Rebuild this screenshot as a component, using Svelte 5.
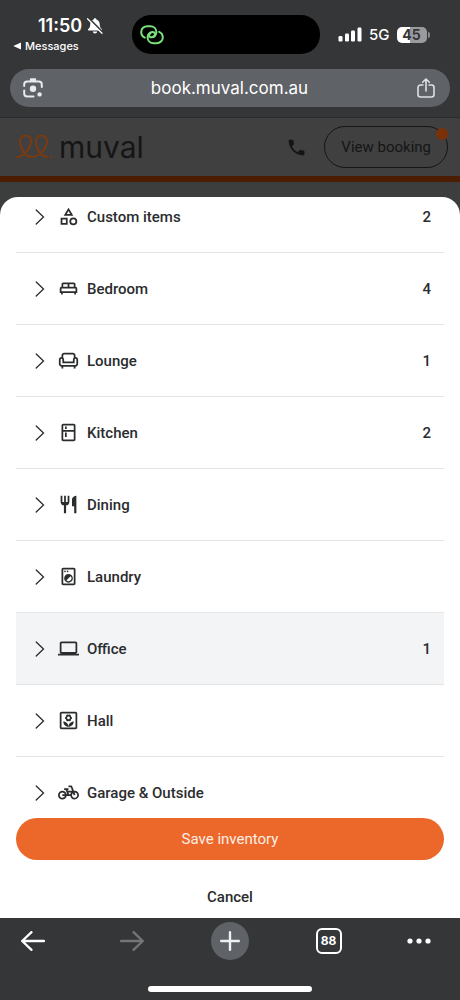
<script>
  const rooms = [
    { name: 'Custom items', count: 2, icon: 'category' },
    { name: 'Bedroom', count: 4, icon: 'bed' },
    { name: 'Lounge', count: 1, icon: 'sofa' },
    { name: 'Kitchen', count: 2, icon: 'fridge' },
    { name: 'Dining', icon: 'dining' },
    { name: 'Laundry', icon: 'laundry' },
    { name: 'Office', count: 1, icon: 'laptop' },
    { name: 'Hall', icon: 'hall' },
    { name: 'Garage & Outside', icon: 'bike' }
  ];

  const icons = {
    category:
      'M12 2l-5.5 9h11L12 2zm0 3.84L13.93 9h-3.87L12 5.84zM17.5 13a4.5 4.5 0 1 0 0 9 4.5 4.5 0 0 0 0-9zm0 7a2.5 2.5 0 1 1 0-5 2.5 2.5 0 0 1 0 5zM3 21.500h8v-8H3v8zm2-6h4v4H5v-4z',
    bed: 'M20 10V7c0-1.100-.9-2-2-2H6c-1.100 0-2 .9-2 2v3c-1.100 0-2 .9-2 2v5h1.330L4 19h1l.67-2h12.670l.66 2h1l.67-2H22v-5c0-1.100-.9-2-2-2zm-7-3h5v3h-5V7zM6 7h5v3H6V7zm14 8H4v-3h16v3z',
    sofa: 'M20 8V6c0-1.660-1.340-3-3-3H7C5.340 3 4 4.340 4 6v2c-1.660 0-3 1.340-3 3v5c0 1.660 1.340 3 3 3v2h2v-2h12v2h2v-2c1.660 0 3-1.340 3-3v-5c0-1.660-1.340-3-3-3zM6 6c0-.55.45-1 1-1h10c.55 0 1 .45 1 1v2.780c-.61.55-1 1.340-1 2.220v2H7v-2c0-.88-.39-1.670-1-2.220V6zm15 10c0 .55-.45 1-1 1H4c-.55 0-1-.45-1-1v-5a1 1 0 0 1 2 0v4h14v-4a1 1 0 0 1 2 0v5z',
    fridge:
      'M18 2H6c-1.100 0-2 .9-2 2v16c0 1.100.9 2 2 2h12c1.100 0 2-.9 2-2V4c0-1.100-.9-2-2-2zm0 18H6v-9h12v9zm0-11H6V4h12v5zM8 5h2v3H8zM8 12h2v5H8z',
    dining:
      'M11 9H9V2H7v7H5V2H3v7c0 2.120 1.660 3.840 3.750 3.970V22h2.500v-9.030C11.340 12.840 13 11.120 13 9V2h-2v7zm5-3v8h2.500v8H21V2c-2.760 0-5 2.240-5 4z',
    laundry:
      'M18 2H6c-1.100 0-2 .9-2 2v16c0 1.100.9 2 2 2h12c1.100 0 2-.9 2-2V4c0-1.100-.9-2-2-2zm0 18H6V4h12v16zM8 5a1 1 0 1 0 0 2 1 1 0 0 0 0-2zM11 5a1 1 0 1 0 0 2 1 1 0 0 0 0-2zM12 19a5 5 0 1 0 0-10 5 5 0 0 0 0 10zm2.360-7.360a3.330 3.330 0 0 1-4.720 4.720l4.720-4.720z',
    laptop:
      'M20 18c1.100 0 2-.9 2-2V6c0-1.100-.9-2-2-2H4c-1.100 0-2 .9-2 2v10c0 1.100.9 2 2 2H0v2h24v-2h-4zM4 6h16v10H4V6z',
    hall: 'M20 2H4c-1.100 0-2 .9-2 2v16c0 1.100.9 2 2 2h16c1.100 0 2-.9 2-2V4c0-1.100-.9-2-2-2zm0 18H4V4h16v16zM12 19c3.310 0 6-2.690 6-6-3.310 0-6 2.690-6 6zM12 19c0-3.310-2.690-6-6-6 0 3.310 2.690 6 6 6zM8 9c0 .8.500 1.400 1.200 1.700a1.800 1.800 0 0 0 2.800 1.900 1.800 1.800 0 0 0 2.800-1.900A1.800 1.800 0 0 0 14.800 7.300 1.800 1.800 0 0 0 12 5.400a1.800 1.800 0 0 0-2.800 1.900C8.500 7.600 8 8.200 8 9zm4-1.600a1.600 1.600 0 1 1 0 3.200 1.600 1.600 0 0 1 0-3.200z',
    bike: 'M18.180 10l-1.700-4.680C16.190 4.530 15.440 4 14.600 4H12v2h2.600l1.460 4h-4.810l-.36-1H12V7H7v2h1.750l1.820 5H9.900c-.44-2.230-2.310-3.880-4.650-3.990C2.450 9.870 0 12.200 0 15c0 2.800 2.200 5 5 5 2.460 0 4.450-1.690 4.900-4h4.200c.44 2.230 2.310 3.880 4.650 3.990 2.800.13 5.250-2.190 5.250-5 0-2.800-2.200-5-5-5h-.82zM7.820 16c-.4 1.170-1.490 2-2.820 2-1.680 0-3-1.320-3-3s1.320-3 3-3c1.330 0 2.420.83 2.820 2H5v2h2.820zm6.280-2h-1.400l-.73-2H15c-.44.58-.76 1.250-.9 2zm4.900 4c-1.680 0-3-1.320-3-3 0-.93.41-1.730 1.050-2.280l.96 2.640 1.880-.68-.97-2.670.08-.01c1.680 0 3 1.320 3 3s-1.320 3-3 3z'
  };

  let active = $state('Office');
</script>

<div class="screen">
  <header class="browser">
    <div class="status">
      <div class="left">
        <div class="clock">
          <span>11:50</span>
          <svg width="18" height="18" viewBox="0 0 18 18" aria-hidden="true">
            <path d="M9 1.200c.8 0 1.300.5 1.400 1.200 2.100.6 3.200 2.300 3.300 4.600.1 2.900.8 3.900 2 5 .7.7.3 1.600-.6 1.600H2.900c-.9 0-1.300-.9-.6-1.600 1.200-1.100 1.900-2.100 2-5 .1-2.300 1.200-4 3.300-4.600.1-.7.6-1.200 1.400-1.200zM6.800 14.600h4.400c-.2 1.200-1 2-2.200 2s-2-.8-2.200-2z" fill="#fff" />
            <path d="M2.600 1.200l14 14" stroke="#343638" stroke-width="2" />
            <path d="M1.500 1.800l14.500 14.400" stroke="#fff" stroke-width="1.300" stroke-linecap="round" />
          </svg>
        </div>
        <a class="back" href="#messages">
          <svg width="8" height="8" viewBox="0 0 8 8" aria-hidden="true"><path d="M8 .5v7L.3 4z" fill="#fff" /></svg>
          Messages
        </a>
      </div>
      <div class="island">
        <svg width="24" height="20" viewBox="0 0 24 20" fill="none" stroke="#7be37c" stroke-width="2" stroke-linecap="round" aria-hidden="true">
          <path d="M4.800 12.600A6.200 6.200 0 0 1 1.200 7c0-3.400 2.800-5.800 6.200-5.800h2.800c3.600 0 6.200 2.500 6.200 5.800 0 3-2 5.300-4.800 5.300-1.600 0-2.600-.9-2.600-2.100 0-1 .6-1.700 1.500-2" />
          <path d="M19.200 6.800a6.200 6.200 0 0 1 3.600 5.600c0 3.400-2.800 5.800-6.200 5.800h-2.800c-3.600 0-6.200-2.500-6.200-5.800 0-3 2-5.300 4.800-5.300 1.600 0 2.600.9 2.600 2.100 0 1-.6 1.700-1.500 2" />
        </svg>
      </div>
      <div class="right">
        <svg width="24" height="15" viewBox="0 0 24 15" fill="#fff" aria-hidden="true">
          <rect x="0.500" y="9" width="4" height="5.500" rx="1.200" /><rect x="7" y="6.500" width="4" height="8" rx="1.200" /><rect x="13" y="3.500" width="4" height="11" rx="1.200" /><rect x="19.500" y="0.500" width="4" height="14" rx="1.200" />
        </svg>
        <span class="net">5G</span>
        <span class="battery">45</span>
      </div>
    </div>
    <div class="address">
      <button aria-label="Search with camera">
        <svg width="20" height="20" viewBox="0 0 20 20" fill="none" stroke="#e8eaed" stroke-width="2" stroke-linecap="round" aria-hidden="true">
          <path d="M1.200 8V6.500a3 3 0 0 1 3-3h11.600a3 3 0 0 1 3 3V9M1.200 12.500v3a3 3 0 0 0 3 3h6.300" />
          <path d="M6.500 3l1.200-2h4.600l1.200 2z" fill="#e8eaed" stroke="none" /><path d="M7.800 1.300h4.400" />
          <circle cx="10" cy="10.800" r="3.200" fill="#e8eaed" stroke="none" /><circle cx="16.600" cy="16.400" r="2.200" fill="#e8eaed" stroke="none" />
        </svg>
      </button>
      <span class="url">book.muval.com.au</span>
      <button aria-label="Share">
        <svg width="20" height="20" viewBox="0 0 20 20" fill="none" stroke="#e0e2e5" stroke-width="1.600" stroke-linecap="round" stroke-linejoin="round" aria-hidden="true">
          <path d="M7 7H4.500a2.500 2.500 0 0 0-2.500 2.500v7A2.500 2.500 0 0 0 4.500 19h11a2.500 2.500 0 0 0 2.500-2.500v-7A2.500 2.500 0 0 0 15.500 7H13M10 13V1.200M6.700 4.300L10 1l3.300 3.300" />
        </svg>
      </button>
    </div>
  </header>

  <div class="site">
    <div class="brand">
      <svg width="38" height="26" viewBox="0 0 38 26" fill="none" stroke="#7b3a10" stroke-width="2" stroke-linecap="round" aria-hidden="true">
        <path d="M1.200 23C7 23 15 14.500 15 7.400 15 3.800 12.800 1.600 9.600 1.600S4 4 4 7.400C4 14 9 23 16 23c6.500 0 15-8.500 15-15.600 0-3.600-2.200-5.800-5.400-5.800S20 4 20 7.400C20 14 24 21.500 31 23" />
        <circle cx="35" cy="23" r="1.200" fill="#7b3a10" stroke="none" />
      </svg>
      <span>muval</span>
    </div>
    <div class="actions">
      <a class="phone" href="#call" aria-label="Call">
        <svg width="21" height="21" viewBox="0 0 24 24" fill="#151515" aria-hidden="true"><path d="M20 15.500c-1.250 0-2.450-.2-3.570-.57a1 1 0 0 0-1.020.24l-2.200 2.200a15.050 15.050 0 0 1-6.590-6.590l2.200-2.210c.28-.26.36-.65.25-1A11.360 11.360 0 0 1 8.500 4c0-.55-.45-1-1-1H4c-.55 0-1 .45-1 1 0 9.390 7.610 17 17 17 .55 0 1-.45 1-1v-3.500c0-.55-.45-1-1-1z" /></svg>
      </a>
      <button class="booking">View booking<span class="dot"></span></button>
    </div>
  </div>

  <div class="backdrop">
    <main class="sheet">
      <ul>
        {#each rooms as room}
          <li>
            <button class="row" class:active={active === room.name} onclick={() => (active = room.name)}>
              <svg class="chevron" width="10" height="16" viewBox="0 0 10 16" aria-hidden="true"><path d="M1.200 1l7.300 7-7.300 7" fill="none" stroke="#2b2c2e" stroke-width="1.300" stroke-linecap="round" /></svg>
              <svg width="21" height="21" viewBox="0 0 24 24" fill="#2b2c2e" fill-rule="evenodd" aria-hidden="true"><path d={icons[room.icon]} /></svg>
              <span class="name">{room.name}</span>
              {#if room.count}<span>{room.count}</span>{/if}
            </button>
          </li>
        {/each}
      </ul>
      <div class="foot">
        <button class="save">Save inventory</button>
        <button class="cancel">Cancel</button>
      </div>
    </main>
  </div>

  <footer>
    <nav aria-label="Browser">
      <button aria-label="Back">
        <svg width="24" height="20" viewBox="0 0 24 20" fill="none" stroke="#fff" stroke-width="2.300" stroke-linecap="round" stroke-linejoin="round" aria-hidden="true"><path d="M23 10H1.200M10.500 1.200L1.200 10l9.300 8.800" /></svg>
      </button>
      <button aria-label="Forward" disabled>
        <svg width="24" height="20" viewBox="0 0 24 20" fill="none" stroke="#737577" stroke-width="2.300" stroke-linecap="round" stroke-linejoin="round" aria-hidden="true"><path d="M1 10h21.800M13.500 1.200l9.300 8.800-9.300 8.800" /></svg>
      </button>
      <button class="plus" aria-label="New tab">
        <svg width="20" height="20" viewBox="0 0 20 20" stroke="#eef0f2" stroke-width="2.400" stroke-linecap="round" aria-hidden="true"><path d="M10 1.200v17.600M1.200 10h17.600" /></svg>
      </button>
      <button aria-label="88 open tabs"><span class="tabs">88</span></button>
      <button class="more" aria-label="More">
        <svg width="24" height="6" viewBox="0 0 24 6" fill="#fff" aria-hidden="true"><circle cx="3" cy="3" r="2.600" /><circle cx="12" cy="3" r="2.600" /><circle cx="21" cy="3" r="2.600" /></svg>
      </button>
    </nav>
    <div class="home"></div>
  </footer>
</div>

<style>
  :global(body) {
    margin: 0;
    background: #343638;
  }
  .screen {
    height: 100vh;
    display: flex;
    flex-direction: column;
    font-family: Roboto, sans-serif;
    font-size: 15px;
    color: #2b2c2e;
  }
  button {
    font: inherit;
    color: inherit;
    background: none;
    border: 0;
    padding: 0;
    cursor: pointer;
  }
  svg {
    display: block;
    flex: none;
  }
  a {
    color: inherit;
    text-decoration: none;
  }
  .browser {
    background: #343638;
    color: #fff;
    font-family: Inter, sans-serif;
    padding: 15px 10px 10px;
    border-bottom: 1px solid #2a2b2c;
  }
  .status {
    display: grid;
    grid-template-columns: 1fr 188px 1fr;
    height: 38px;
    margin: 0 8px 16px 0;
  }
  .left {
    display: flex;
    flex-direction: column;
    gap: 1px;
  }
  .clock {
    display: flex;
    align-items: center;
    gap: 4px;
    padding-left: 28px;
    font-size: 18px;
    line-height: 22px;
    font-weight: 600;
  }
  .back {
    display: flex;
    align-items: center;
    gap: 4px;
    padding-left: 3px;
    font-size: 11px;
    line-height: 16px;
    font-weight: 500;
  }
  .island {
    background: #000;
    border-radius: 19px;
    display: flex;
    align-items: center;
    padding-left: 8px;
  }
  .right {
    display: flex;
    align-items: center;
    gap: 7px;
    padding-left: 18px;
  }
  .net {
    font-size: 15px;
    font-weight: 500;
  }
  .battery {
    position: relative;
    width: 30px;
    border-radius: 5px;
    background: linear-gradient(90deg, #fff 45%, #9a9b9c 45%);
    color: #343638;
    font-size: 14px;
    line-height: 16px;
    font-weight: 700;
    text-align: center;
  }
  .battery::after {
    content: '';
    position: absolute;
    left: 31px;
    top: 5px;
    width: 2px;
    height: 6px;
    border-radius: 0 2px 2px 0;
    background: #8a8b8c;
  }
  .address {
    height: 38px;
    border-radius: 19px;
    background: #5f6267;
    display: flex;
    align-items: center;
    justify-content: space-between;
    padding: 0 14px 0 13px;
  }
  .url {
    font-size: 17px;
  }
  .site {
    background: #404040;
    border-bottom: 6px solid #4c1d03;
    display: flex;
    align-items: center;
    justify-content: space-between;
    padding: 0 12px 0 16px;
    height: 58px;
  }
  .brand {
    display: flex;
    align-items: center;
    gap: 5px;
    font-family: Inter, sans-serif;
    font-size: 30px;
    line-height: 36px;
    color: #151515;
  }
  .actions {
    display: flex;
    align-items: center;
    gap: 17px;
  }
  .booking {
    position: relative;
    height: 42px;
    padding: 0 16px;
    border: 1px solid #151515;
    border-radius: 21px;
    color: #151515;
  }
  .dot {
    position: absolute;
    top: 1px;
    right: -1px;
    width: 12px;
    height: 12px;
    border-radius: 50%;
    background: #7b3108;
  }
  .backdrop {
    background: #3c3e3e;
    flex: 1;
    min-height: 0;
    display: flex;
    padding-top: 15px;
  }
  .sheet {
    flex: 1;
    min-width: 0;
    display: flex;
    flex-direction: column;
    background: #fff;
    border-radius: 18px 18px 0 0;
    overflow: hidden;
  }
  ul {
    list-style: none;
    margin: -16px 16px 0;
    padding: 0;
    flex: 1;
    min-height: 0;
    overflow: hidden;
  }
  .row {
    width: 100%;
    height: 72px;
    display: flex;
    align-items: center;
    padding: 0 13px 0 19px;
    border-bottom: 1px solid #e4e5e7;
    font-weight: 500;
    text-align: left;
  }
  .row.active {
    background: #f2f4f5;
  }
  .chevron {
    margin-right: 13px;
  }
  .name {
    flex: 1;
    margin-left: 8px;
  }
  .foot {
    display: flex;
    flex-direction: column;
    padding: 0 16px;
  }
  .save {
    height: 42px;
    border-radius: 21px;
    background: #ec682a;
    color: #fdeee5;
  }
  .cancel {
    height: 42px;
    margin-top: 16px;
    font-weight: 500;
  }
  footer {
    background: #343638;
    height: 82px;
    display: flex;
    flex-direction: column;
    align-items: center;
    justify-content: space-between;
    color: #fff;
  }
  nav {
    width: 100%;
    box-sizing: border-box;
    padding: 4px 30px 0 14px;
    display: flex;
    justify-content: space-between;
  }
  nav button {
    width: 38px;
    height: 38px;
    display: flex;
    align-items: center;
    justify-content: center;
  }
  nav .more {
    width: 22px;
  }
  .plus {
    border-radius: 50%;
    background: #5f6267;
  }
  .tabs {
    width: 22px;
    border: 2px solid #fff;
    border-radius: 6px;
    font: 700 12px/22px Inter, sans-serif;
    text-align: center;
  }
  .home {
    width: 164px;
    height: 6px;
    border-radius: 3px;
    background: #fff;
    margin-bottom: 8px;
  }
</style>
